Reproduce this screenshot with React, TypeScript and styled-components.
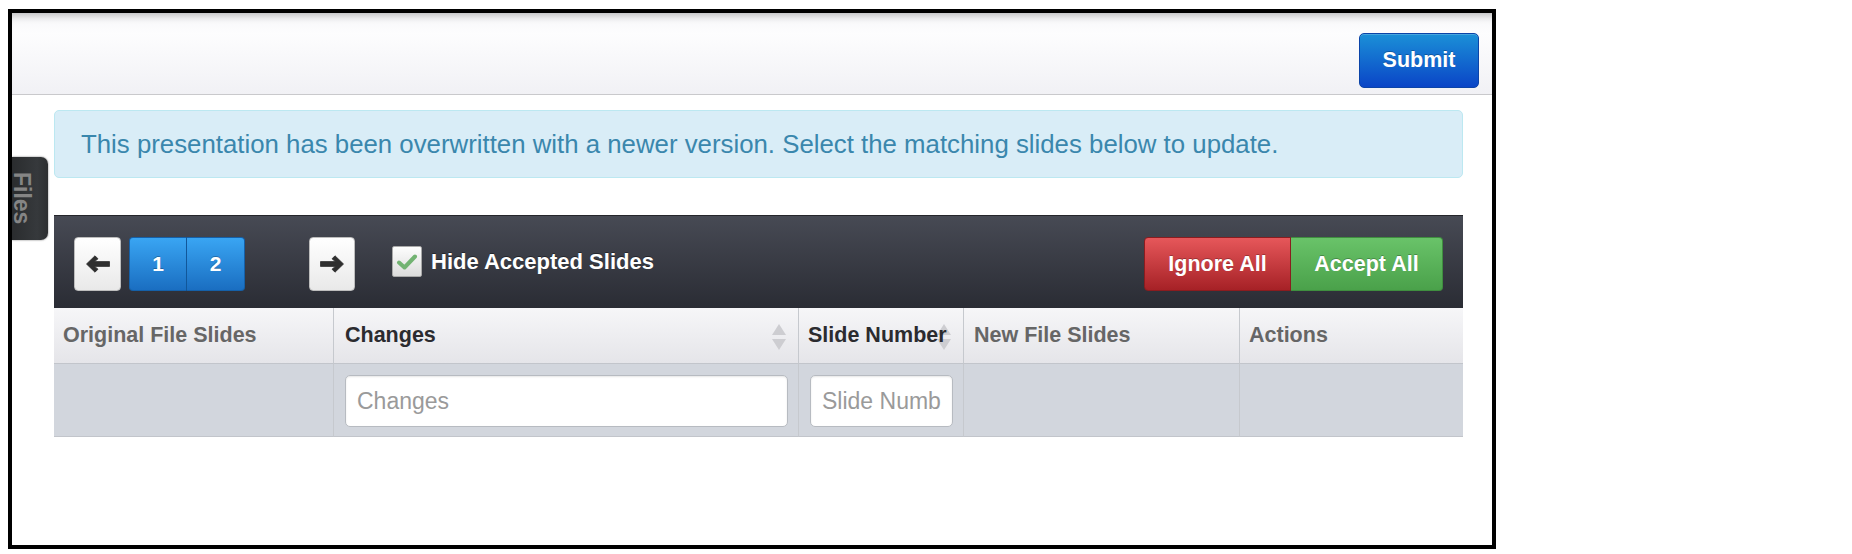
import React from "react";
import styled, { createGlobalStyle, css } from "styled-components";

const GlobalStyle = createGlobalStyle`
  html, body { margin: 0; padding: 0; background: #ffffff; }
  body { font-family: "Liberation Sans", Arial, Helvetica, sans-serif; }
  *, *::before, *::after { box-sizing: border-box; }
`;

const Frame = styled.div`
  position: relative;
  margin: 9px 0 0 8px;
  width: 1488px;
  height: 540px;
  border: 4px solid #000;
  background: #fff;
  overflow: hidden;
`;

const TopBar = styled.header`
  height: 82px;
  display: flex;
  justify-content: flex-end;
  align-items: flex-start;
  padding: 20px 13px 0 0;
  background: linear-gradient(180deg, #f6f6f8 0%, #fdfdfe 25%, #f1f1f5 100%);
  box-shadow: inset 0 9px 9px -7px rgba(0, 0, 0, 0.28);
  border-bottom: 1px solid #c9c9cc;
`;

const SubmitButton = styled.button`
  width: 120px;
  height: 55px;
  border: 1px solid #0b44a8;
  border-radius: 5px;
  background: linear-gradient(180deg, #1b90d7 0%, #0a45c7 100%);
  color: #fff;
  font-family: inherit;
  font-weight: 700;
  font-size: 21.5px;
  text-shadow: 0 -1px 0 rgba(0, 0, 0, 0.25);
  box-shadow: inset 0 1px 0 rgba(255, 255, 255, 0.2);
  padding: 0;
`;

const FilesTab = styled.div`
  position: absolute;
  left: 0;
  top: 144px;
  width: 36px;
  height: 83px;
  display: flex;
  flex-direction: column;
  align-items: flex-start;
  padding-top: 15px;
  background: linear-gradient(90deg, #2a2c2e 0%, #36393c 70%, #2c2e30 100%);
  border-radius: 0 7px 7px 0;
  box-shadow: 0 0 2px rgba(0, 0, 0, 0.6);
`;

const FilesLabel = styled.span`
  writing-mode: vertical-rl;
  font-weight: 700;
  font-size: 23px;
  line-height: 20px;
  color: #858585;
`;

const Content = styled.main`
  margin: 15px 29px 0 42px;
`;

const Alert = styled.div`
  height: 68px;
  display: flex;
  align-items: center;
  padding: 0 26px;
  background: #d9edf7;
  border: 1px solid #bce8f1;
  border-radius: 5px;
  color: #3a87ad;
  font-size: 25.8px;
  white-space: nowrap;
`;

const Toolbar = styled.div`
  margin-top: 37px;
  height: 93px;
  display: flex;
  align-items: flex-start;
  padding: 21px 20px 0 20px;
  background: linear-gradient(180deg, #474a54 0%, #2a2c34 100%);
  border-top: 1px solid #25262b;
`;

const NavButton = styled.button<{ $width: number; $gap?: number }>`
  width: ${(p) => p.$width}px;
  height: 54px;
  margin-left: ${(p) => p.$gap ?? 0}px;
  padding: 0;
  display: flex;
  align-items: center;
  justify-content: center;
  background: linear-gradient(180deg, #ffffff 0%, #e9e9e9 100%);
  border: 1px solid #bdbdbd;
  border-radius: 4px;
  color: #333;
`;

const PageGroup = styled.div`
  display: flex;
  margin-left: 8px;
`;

const PageButton = styled.button<{ $first?: boolean; $last?: boolean }>`
  width: 58px;
  height: 54px;
  padding: 0;
  background: linear-gradient(180deg, #39a5f3 0%, #1a6ec1 100%);
  border: 1px solid #1560a8;
  color: #fff;
  font-family: inherit;
  font-weight: 700;
  font-size: 21px;
  text-shadow: 0 -1px 0 rgba(0, 0, 0, 0.25);
  ${(p) =>
    p.$first &&
    css`
      border-radius: 4px 0 0 4px;
      border-right: 1px solid #11579a;
    `}
  ${(p) =>
    p.$last &&
    css`
      border-radius: 0 4px 4px 0;
      border-left: none;
    `}
`;

const CheckLabel = styled.label`
  margin-left: 37px;
  height: 54px;
  padding-bottom: 5px;
  display: flex;
  align-items: center;
  gap: 9px;
  color: #fff;
  font-weight: 700;
  font-size: 22px;
  text-shadow: 0 -1px 0 rgba(0, 0, 0, 0.4);
`;

const CheckBox = styled.span`
  width: 30px;
  height: 31px;
  display: flex;
  align-items: center;
  justify-content: center;
  background: linear-gradient(180deg, #fdfdfd 0%, #dcdcdc 100%);
  border: 1px solid #a9a9a9;
  border-radius: 2px;
`;

const ActionGroup = styled.div`
  margin-left: auto;
  display: flex;
`;

const ActionButton = styled.button<{ $variant: "danger" | "success"; $width: number }>`
  width: ${(p) => p.$width}px;
  height: 54px;
  padding: 0;
  color: #fff;
  font-family: inherit;
  font-weight: 700;
  font-size: 21.5px;
  text-shadow: 0 -1px 0 rgba(0, 0, 0, 0.25);
  ${(p) =>
    p.$variant === "danger"
      ? css`
          background: linear-gradient(180deg, #e6575a 0%, #a62126 100%);
          border: 1px solid #8a1c1f;
          border-radius: 4px 0 0 4px;
        `
      : css`
          background: linear-gradient(180deg, #69c369 0%, #4aa14a 100%);
          border: 1px solid #3f8e3f;
          border-left: none;
          border-radius: 0 4px 4px 0;
        `}
`;

const Table = styled.div`
  display: grid;
  grid-template-columns: 280px 465px 165px 276px 223px;
`;

const HeaderCell = styled.div<{ $dark?: boolean; $last?: boolean; $pad?: number }>`
  position: relative;
  height: 56px;
  display: flex;
  align-items: center;
  padding: 0 8px 0 ${(p) => p.$pad ?? 10}px;
  background: linear-gradient(180deg, #f6f6f8 0%, #e5e5e9 100%);
  border-bottom: 1px solid #c2c5cb;
  border-right: ${(p) => (p.$last ? "none" : "1px solid #c6c9ce")};
  font-weight: 700;
  font-size: 21.5px;
  color: ${(p) => (p.$dark ? "#2b2b2f" : "#666")};
  white-space: nowrap;
  overflow: hidden;
`;

const HeaderText = styled.span`
  position: relative;
  z-index: 1;
`;

const SortIcon = styled.svg`
  position: absolute;
  right: 12px;
  top: 16px;
  width: 14px;
  height: 26px;
`;

const FilterCell = styled.div<{ $last?: boolean }>`
  height: 73px;
  padding: 11px 10px 0 11px;
  background: #d2d6dd;
  border-bottom: 1px solid #c2c5cb;
  border-right: ${(p) => (p.$last ? "none" : "1px solid #c6c9ce")};
`;

const FilterInput = styled.input`
  width: 100%;
  height: 52px;
  padding: 0 11px;
  border: 1px solid #b7bbc1;
  border-radius: 5px;
  background: #fff;
  box-shadow: inset 0 1px 2px rgba(0, 0, 0, 0.1);
  font-family: "Liberation Sans", Arial, sans-serif;
  font-size: 23px;
  color: #333;
  outline: none;
  &::placeholder {
    color: #9a9a9a;
  }
`;

const Arrow = ({ dir }: { dir: "left" | "right" }) => (
  <svg
    width="24"
    height="18"
    viewBox="0 0 24 18"
    style={dir === "right" ? { transform: "scaleX(-1)" } : undefined}
  >
    <path
      d="M0.5 9 L9 0.8 L12 3.8 L8.6 6.6 H23.5 V11.4 H8.6 L12 14.2 L9 17.2 Z"
      fill="#2f2f2f"
      strokeLinejoin="round"
      stroke="#2f2f2f"
      strokeWidth="0.8"
    />
  </svg>
);

const Sort = () => (
  <SortIcon viewBox="0 0 14 26">
    <path d="M7 0 L14 11 H0 Z" fill="#cdcdd1" />
    <path d="M0 15 H14 L7 26 Z" fill="#cdcdd1" />
  </SortIcon>
);

const Check = () => (
  <svg width="22" height="18" viewBox="0 0 22 18">
    <path
      d="M3 9.5 L8.5 14.5 L19 3.5"
      fill="none"
      stroke="#72b372"
      strokeWidth="4"
      strokeLinecap="round"
      strokeLinejoin="round"
    />
  </svg>
);

export default function App() {
  return (
    <>
      <GlobalStyle />
      <Frame>
        <TopBar>
          <SubmitButton>Submit</SubmitButton>
        </TopBar>
        <FilesTab>
          <FilesLabel>Files</FilesLabel>
        </FilesTab>
        <Content>
          <Alert>
            This presentation has been overwritten with a newer version. Select the matching slides
            below to update.
          </Alert>
          <Toolbar>
            <NavButton $width={47} aria-label="Previous">
              <Arrow dir="left" />
            </NavButton>
            <PageGroup>
              <PageButton $first>1</PageButton>
              <PageButton $last>2</PageButton>
            </PageGroup>
            <NavButton $width={46} $gap={64} aria-label="Next">
              <Arrow dir="right" />
            </NavButton>
            <CheckLabel>
              <CheckBox>
                <Check />
              </CheckBox>
              Hide Accepted Slides
            </CheckLabel>
            <ActionGroup>
              <ActionButton $variant="danger" $width={147}>
                Ignore All
              </ActionButton>
              <ActionButton $variant="success" $width={152}>
                Accept All
              </ActionButton>
            </ActionGroup>
          </Toolbar>
          <Table>
            <HeaderCell $pad={9}>
              <HeaderText>Original File Slides</HeaderText>
            </HeaderCell>
            <HeaderCell $dark $pad={11}>
              <Sort />
              <HeaderText>Changes</HeaderText>
            </HeaderCell>
            <HeaderCell $dark $pad={9}>
              <Sort />
              <HeaderText>Slide Number</HeaderText>
            </HeaderCell>
            <HeaderCell $pad={10}>
              <HeaderText>New File Slides</HeaderText>
            </HeaderCell>
            <HeaderCell $last $pad={9}>
              <HeaderText>Actions</HeaderText>
            </HeaderCell>

            <FilterCell />
            <FilterCell>
              <FilterInput placeholder="Changes" />
            </FilterCell>
            <FilterCell>
              <FilterInput placeholder="Slide Number" />
            </FilterCell>
            <FilterCell />
            <FilterCell $last />
          </Table>
        </Content>
      </Frame>
    </>
  );
}
